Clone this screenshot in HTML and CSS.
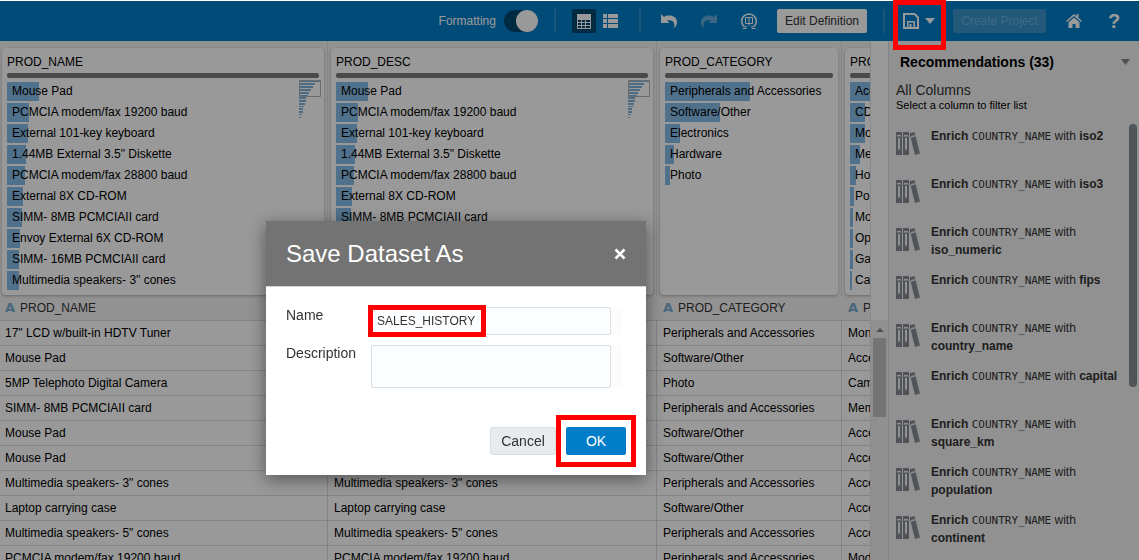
FILE: index.html
```html
<!DOCTYPE html>
<html lang="en">
<head>
<meta charset="utf-8">
<title>Dataset Editor</title>
<link rel="stylesheet" href="styles.css">
</head>
<body>
<svg class="defs" aria-hidden="true">
  <symbol id="books" viewBox="0 0 24 24">
    <path fill="currentColor" fill-rule="evenodd" d="M0 0h6v23H0zM1 3v1.500h4V3zM2 6v11.500h2V6zM7 0h6v23H7zM8 3v1.500h4V3zM9 6v11.500h2V6z"/>
    <path fill="currentColor" d="M13.500 1.500 18.500 0 24 21.500 19 23z"/>
    <path stroke="#f2f2f2" stroke-width="1.500" d="m15 5 4-1.200"/>
  </symbol>
  <symbol id="mini" viewBox="0 0 22 38">
    <path fill="currentColor" d="M1 1h20v1H1zM1 3h15v2H1zM1 6h13v2H1zM1 9h11v2H1zM1 12h9v2H1zM1 15h8v1H1zM0 17h7v2H0zM0 20h7v2H0zM0 23h6v2H0zM0 26h5v1H0zM0 28h4v2H0zM0 31h4v2H0zM0 34h3v1H0zM0 37h2v1H0z"/>
    <path fill="none" stroke="#b4b4b4" d="M.5.5h21v16H.5z"/>
  </symbol>
</svg>
<div class="app">
  <header class="toolbar">
    <label class="switch">Formatting <input type="checkbox" role="switch" checked></label>
    <span class="divider"></span>
    <div class="views">
      <button class="tool active" aria-label="Grid view"><svg width="14" height="15" viewBox="0 0 14 15"><path fill="currentColor" fill-rule="evenodd" d="M0 0h14v15H0zM1 6v2h3V6zm4 0v2h3V6zm4 0v2h4V6zM1 9v2h3V9zm4 0v2h3V9zm4 0v2h4V9zM1 12v2h3v-2zm4 0v2h3v-2zm4 0v2h4v-2z"/></svg></button>
      <button class="tool" aria-label="List view"><svg width="15" height="14" viewBox="0 0 15 14"><path fill="currentColor" d="M0 0h4v4H0zM5 0h10v4H5zM0 5h4v4H0zM5 5h10v4H5zM0 10h4v4H0zM5 10h10v4H5z"/></svg></button>
    </div>
    <span class="divider"></span>
    <div class="history">
      <button class="tool" aria-label="Undo"><svg width="16" height="14" viewBox="0 0 16 14"><path fill="currentColor" d="M0 0 3 3C8 0 16 2 16 8c0 3-1.500 5-3 6 1.500-5-1-9-7-7.500L8.500 9H0z"/></svg></button>
      <button class="tool" aria-label="Redo" disabled><svg width="16" height="14" viewBox="0 0 16 14"><path fill="currentColor" d="m16 0-3 3C8 0 0 2 0 8c0 3 1.500 5 3 6-1.500-5 1-9 7-7.500L7.500 9H16z"/></svg></button>
      <button class="tool" aria-label="Refresh data"><svg width="18" height="18" viewBox="0 0 18 18" fill="none" stroke="currentColor"><path stroke-width="1.500" d="M4.500 15A7.300 7.300 0 1 1 13.500 15"/><path d="M5.500 5.500h7v6h-7zM9 5.500v8"/><path d="M2.500 16.500h3.500v-3M15.500 16.500H12v-3"/></svg></button>
    </div>
    <button class="light">Edit Definition</button>
    <span class="divider"></span>
    <button class="save" aria-label="Save"><svg width="16" height="16" viewBox="0 0 16 16"><path fill="none" stroke="currentColor" stroke-width="2" d="M1 1h10.500L15 4.500V15H1z"/><path fill="none" stroke="currentColor" stroke-width="1.500" d="M4.750 14V8.750h6.500V14"/><path fill="currentColor" d="M6.500 11h2v3h-2z"/></svg><svg width="10" height="6" viewBox="0 0 10 6"><path fill="currentColor" d="M0 0h10L5 6z"/></svg></button>
    <button class="create" disabled>Create Project</button>
    <button class="tool" aria-label="Home"><svg width="16" height="14" viewBox="0 0 16 14"><path fill="currentColor" d="M0 7 8 0l2.500 2.200V0h2v4L16 7l-1 1-7-6-7 6z"/><path fill="currentColor" d="m8 3.500 5.500 4.700V14h-4v-4h-3v4h-4V8.200z"/></svg></button>
    <button class="tool help" aria-label="Help">?</button>
  </header>

  <div class="workspace">
    <main class="data">
      <section class="cards">
        <div class="col wide"><article class="card"><h2>PROD_NAME</h2>
          <ul>
            <li style="--w:32px">Mouse Pad</li><li style="--w:22px">PCMCIA modem/fax 19200 baud</li><li style="--w:21px">External 101-key keyboard</li><li style="--w:19px">1.44MB External 3.5" Diskette</li><li style="--w:18px">PCMCIA modem/fax 28800 baud</li><li style="--w:16px">External 8X CD-ROM</li><li style="--w:15px">SIMM- 8MB PCMCIAII card</li><li style="--w:13px">Envoy External 6X CD-ROM</li><li style="--w:12px">SIMM- 16MB PCMCIAII card</li><li style="--w:12px">Multimedia speakers- 3" cones</li>
          </ul><svg class="mini" width="22" height="38"><use href="#mini"/></svg></article></div>
        <div class="col wide"><article class="card"><h2>PROD_DESC</h2>
          <ul>
            <li style="--w:32px">Mouse Pad</li><li style="--w:22px">PCMCIA modem/fax 19200 baud</li><li style="--w:21px">External 101-key keyboard</li><li style="--w:19px">1.44MB External 3.5" Diskette</li><li style="--w:18px">PCMCIA modem/fax 28800 baud</li><li style="--w:16px">External 8X CD-ROM</li><li style="--w:15px">SIMM- 8MB PCMCIAII card</li><li style="--w:13px">Envoy External 6X CD-ROM</li><li style="--w:12px">SIMM- 16MB PCMCIAII card</li><li style="--w:12px">Multimedia speakers- 3" cones</li>
          </ul><svg class="mini" width="22" height="38"><use href="#mini"/></svg></article></div>
        <div class="col"><article class="card"><h2>PROD_CATEGORY</h2>
          <ul>
            <li style="--w:85px">Peripherals and Accessories</li><li style="--w:55px">Software/Other</li><li style="--w:15px">Electronics</li><li style="--w:9px">Hardware</li><li style="--w:5px">Photo</li>
          </ul></article></div>
        <div class="col"><article class="card"><h2>PROD_SUBCATEGORY</h2>
          <ul>
            <li style="--w:30px">Accessories</li><li style="--w:15px">CD-ROM</li><li style="--w:15px">Modems/Fax</li><li style="--w:10px">Memory</li><li style="--w:6px">Home Audio</li><li style="--w:4px">Portable PCs</li><li style="--w:3px">Monitors</li><li style="--w:3px">Operating Systems</li><li style="--w:3px">Game Consoles</li><li style="--w:2px">Camcorders</li>
          </ul></article></div>
      </section>
      <table class="grid">
        <thead><tr><th class="wide"><b>A</b>PROD_NAME</th><th class="wide"><b>A</b>PROD_DESC</th><th><b>A</b>PROD_CATEGORY</th><th><b>A</b>PROD_SUBCATEGORY</th></tr></thead>
        <tbody>
          <tr><td>17" LCD w/built-in HDTV Tuner</td><td>17" LCD w/built-in HDTV Tuner</td><td>Peripherals and Accessories</td><td>Monitors</td></tr>
          <tr><td>Mouse Pad</td><td>Mouse Pad</td><td>Software/Other</td><td>Accessories</td></tr>
          <tr><td>5MP Telephoto Digital Camera</td><td>5MP Telephoto Digital Camera</td><td>Photo</td><td>Cameras</td></tr>
          <tr><td>SIMM- 8MB PCMCIAII card</td><td>SIMM- 8MB PCMCIAII card</td><td>Peripherals and Accessories</td><td>Memory</td></tr>
          <tr><td>Mouse Pad</td><td>Mouse Pad</td><td>Software/Other</td><td>Accessories</td></tr>
          <tr><td>Mouse Pad</td><td>Mouse Pad</td><td>Software/Other</td><td>Accessories</td></tr>
          <tr><td>Multimedia speakers- 3" cones</td><td>Multimedia speakers- 3" cones</td><td>Peripherals and Accessories</td><td>Accessories</td></tr>
          <tr><td>Laptop carrying case</td><td>Laptop carrying case</td><td>Software/Other</td><td>Accessories</td></tr>
          <tr><td>Multimedia speakers- 5" cones</td><td>Multimedia speakers- 5" cones</td><td>Peripherals and Accessories</td><td>Accessories</td></tr>
          <tr><td>PCMCIA modem/fax 19200 baud</td><td>PCMCIA modem/fax 19200 baud</td><td>Peripherals and Accessories</td><td>Modems/Fax</td></tr>
        </tbody>
      </table>
    </main>
    <div class="gutter">
      <div class="gutter-top"></div>
      <div class="track"><svg width="8" height="4" viewBox="0 0 8 4"><path fill="#888" d="M0 4h8L4 0z"/></svg><span class="thumb"></span></div>
    </div>
    <aside class="panel">
      <h1>Recommendations (33)<svg width="9" height="6" viewBox="0 0 9 6"><path fill="#888" d="M0 0h9L4.500 6z"/></svg></h1>
      <p class="scope">All Columns</p>
      <p class="hint">Select a column to filter list</p>
      <div class="recs">
        <ul>
          <li><svg width="24" height="24"><use href="#books"/></svg><p><b>Enrich</b> <code>COUNTRY_NAME</code> with <b>iso2</b></p></li>
          <li><svg width="24" height="24"><use href="#books"/></svg><p><b>Enrich</b> <code>COUNTRY_NAME</code> with <b>iso3</b></p></li>
          <li><svg width="24" height="24"><use href="#books"/></svg><p><b>Enrich</b> <code>COUNTRY_NAME</code> with <b>iso_numeric</b></p></li>
          <li><svg width="24" height="24"><use href="#books"/></svg><p><b>Enrich</b> <code>COUNTRY_NAME</code> with <b>fips</b></p></li>
          <li><svg width="24" height="24"><use href="#books"/></svg><p><b>Enrich</b> <code>COUNTRY_NAME</code> with <b>country_name</b></p></li>
          <li><svg width="24" height="24"><use href="#books"/></svg><p><b>Enrich</b> <code>COUNTRY_NAME</code> with <b>capital</b></p></li>
          <li><svg width="24" height="24"><use href="#books"/></svg><p><b>Enrich</b> <code>COUNTRY_NAME</code> with <b>square_km</b></p></li>
          <li><svg width="24" height="24"><use href="#books"/></svg><p><b>Enrich</b> <code>COUNTRY_NAME</code> with <b>population</b></p></li>
          <li><svg width="24" height="24"><use href="#books"/></svg><p><b>Enrich</b> <code>COUNTRY_NAME</code> with <b>continent</b></p></li>
        </ul>
        <span class="rec-thumb"></span>
      </div>
    </aside>
  </div>
</div>

<div class="backdrop"></div>
<form class="dialog" role="dialog" aria-labelledby="dialog-title">
  <div class="dialog-head"><h2 id="dialog-title">Save Dataset As</h2><button type="button" class="close" aria-label="Close"><svg width="12" height="12" viewBox="0 0 12 12"><path stroke="currentColor" stroke-width="2.500" d="m1.500 1.500 9 9M10.500 1.500l-9 9"/></svg></button></div>
  <div class="dialog-body">
    <label for="ds-name">Name</label>
    <div class="field marked"><input id="ds-name" type="text" value="SALES_HISTORY"></div>
    <label for="ds-desc">Description</label>
    <div class="field"><textarea id="ds-desc"></textarea></div>
  </div>
  <div class="dialog-foot"><button type="button" class="cancel">Cancel</button><button type="submit" class="ok">OK</button></div>
</form>
</body>
</html>
```
FILE: styles.css
```css
*, *::before, *::after { box-sizing: border-box; }
body, h1, h2, p, ul { margin: 0; padding: 0; }
ul { list-style: none; }
body { font: 12px/18px "Liberation Sans", Arial, sans-serif; color: #000; background: #fff; overflow: hidden; }
button { font: inherit; color: inherit; padding: 0; border: 0; background: none; display: flex; align-items: center; justify-content: center; }
svg { display: block; flex: none; }
.defs { position: absolute; width: 0; height: 0; }

.app { display: flex; flex-direction: column; height: 100vh; padding-top: 1px; }

/* Toolbar */
.toolbar { display: flex; align-items: center; justify-content: flex-end; gap: 16px; height: 40px; flex: none; padding-right: 13px; background: #007dc8; color: #fff; }
.switch { display: flex; align-items: center; gap: 8px; }
.switch input { appearance: none; display: flex; justify-content: flex-end; width: 34px; height: 22px; margin: 0; border-radius: 11px; background: #00466f; }
.switch input::before { content: ""; width: 22px; height: 22px; border-radius: 50%; background: #fff; }
.divider { width: 2px; height: 24px; background: #2c92d0; }
.views { display: flex; gap: 3px; }
.history { display: flex; gap: 16px; }
.tool { width: 24px; height: 24px; }
.tool.active { background: #00466f; border-radius: 2px; }
.tool:disabled { color: #61aedd; }
.light, .create { height: 24px; padding: 0 8px; border-radius: 2px; }
.light { background: #fff; color: #333; }
.create { background: #3a93cc; color: #6ab0dc; width: 93px; }
.save { position: relative; width: 36px; gap: 6px; height: 24px; }
.save::after { content: ""; position: absolute; inset: -9px -9px -17px -8px; border: 5px solid red; z-index: 30; }
.help { font-size: 20px; font-weight: bold; }

/* Workspace */
.workspace { display: flex; flex: 1; min-height: 0; }
.data { flex: 1; min-width: 0; overflow: hidden; background: #f4f4f4; }
.cards { display: flex; height: 255px; margin-left: -1px; }
.col { flex: none; width: 185px; padding: 7px 3px 0; border-right: 1px solid #e0e0e0; }
.col.wide { width: 329px; }
.card { position: relative; height: 247px; padding: 5px; background: #fff; border-radius: 4px; box-shadow: 0 1px 3px rgba(0, 0, 0, .3); }
.card h2 { padding-bottom: 2px; border-bottom: 0; font-size: 12px; font-weight: normal; }
.card h2::after { content: ""; display: block; height: 5px; margin-top: 2px; border-radius: 2px; background: #7c7c7c; }
.card ul { display: grid; gap: 2px; margin-top: 2px; }
.card li { height: 19px; padding-left: 5px; line-height: 18px; white-space: nowrap; overflow: hidden; background: linear-gradient(#85bce8, #85bce8) no-repeat 0 0 / var(--w) 100%; }
.mini { position: absolute; right: 3px; top: 32px; color: #7fb1d8; }

/* Grid */
.grid { width: 1028px; margin-left: -1px; table-layout: fixed; border-collapse: separate; border-spacing: 0; }
.grid th, .grid td { width: 185px; height: 25px; padding: 0 0 0 6px; text-align: left; font-weight: normal; line-height: 18px; border-bottom: 1px solid #dcdcdc; white-space: nowrap; overflow: hidden; }
.grid td { background: #fff; border-right: 1px solid #dcdcdc; }
.grid th.wide { width: 329px; }
.grid th { color: #333; }
.grid th b { display: inline-block; width: 15px; color: #78abcf; font: bold 13px/14px "DejaVu Sans", sans-serif; }

/* Gutter */
.gutter { display: flex; flex-direction: column; flex: none; width: 18px; border-left: 1px solid #e4e4e4; }
.gutter-top { height: 279px; background: #fff; }
.track { flex: 1; display: flex; flex-direction: column; align-items: center; gap: 6px; padding-top: 8px; background: #f1f1f1; }
.thumb { width: 13px; height: 79px; background: #c1c1c1; }

/* Recommendations */
.panel { flex: none; width: 251px; padding: 11px 2px 0 7px; background: #f2f2f2; border-left: 1px solid #d6dfe6; color: #333; }
.panel h1 { display: flex; align-items: center; justify-content: space-between; padding: 0 7px 0 4px; font-size: 14px; line-height: 20px; color: #000; }
.scope { margin-top: 9px; font-size: 14px; line-height: 18px; }
.hint { font-size: 11px; line-height: 12px; color: #000; }
.recs { display: flex; margin-top: 13px; gap: 4px; }
.recs ul { flex: 1; padding-top: 3px; }
.recs li { display: flex; gap: 11px; height: 48px; }
.recs li svg { margin-top: 5px; color: #858d93; }
.recs code { font: 11px/12px "DejaVu Sans Mono", monospace; }
.rec-thumb { width: 8px; height: 263px; border-radius: 4px; background: #858e94; }

/* Dialog */
.backdrop { position: fixed; inset: 1px 0 0; z-index: 10; background: rgba(0, 0, 0, .4); }
.dialog { position: absolute; left: 266px; top: 221px; z-index: 20; width: 380px; background: #fff; box-shadow: 0 4px 16px rgba(0, 0, 0, .45); color: #333; font-size: 14px; }
.dialog-head { display: flex; align-items: center; justify-content: space-between; height: 66px; padding: 0 20px; background: #737373; border-bottom: 1px solid #d5d5d5; color: #fff; }
.dialog-head h2 { font-size: 24px; font-weight: normal; line-height: 28px; }
.dialog-body { display: grid; grid-template-columns: 1fr 251px; gap: 10px 0; padding: 20px 24px 0 20px; }
.dialog-body label { line-height: 16px; }
.field { position: relative; display: flex; padding-right: 11px; background: #fcfcfc; }
.field input, .field textarea { flex: 1; min-width: 0; height: 28px; margin: 0; padding: 0 5px; font: 12px/18px "Liberation Sans", Arial, sans-serif; color: #333; background: #fcfdfe; border: 1px solid #d6dfe6; border-radius: 2px; resize: none; outline: 0; }
.field textarea { height: 43px; }
.marked::after, .ok::after { content: ""; position: absolute; border: 5px solid red; }
.marked::after { left: -3px; top: -2px; width: 118px; height: 32px; }
.dialog-foot { display: flex; justify-content: flex-end; gap: 10px; padding: 39px 20px 20px; }
.dialog-foot button { height: 28px; border-radius: 2px; }
.cancel { width: 66px; background: #e7ebee; border: 1px solid #d6dfe6; }
.ok { position: relative; width: 60px; background: #007dc8; color: #fff; }
.dialog-foot .ok::after { inset: -12px -10px; }
```
